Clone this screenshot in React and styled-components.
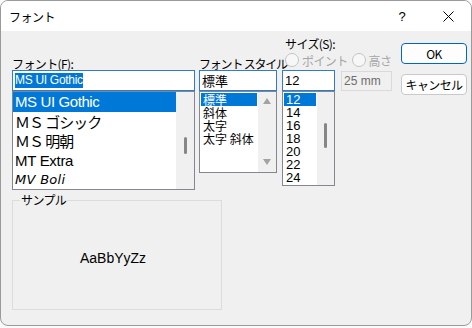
import React from 'react'
import styled, { createGlobalStyle } from 'styled-components'

const GlobalStyle = createGlobalStyle`
  html, body { margin: 0; padding: 0; background: #fafafa; }
  body { font-family: "Noto Sans CJK JP", "Noto Sans", sans-serif; }
`

const Window = styled.div`
  width: 472px;
  height: 326px;
  box-sizing: border-box;
  border: 1px solid #9a9a9a;
  border-radius: 8px;
  overflow: hidden;
  display: flex;
  flex-direction: column;
  background: #f0f0f0;
`

const TitleBar = styled.div`
  height: 30px;
  background: #fff;
  display: flex;
  align-items: center;
  padding-left: 8px;
  font-size: 12px;
  color: #000;
`

const TitleText = styled.div`
  flex: 1;
  letter-spacing: -0.5px;
`

const TitleBtn = styled.div`
  width: 46px;
  height: 30px;
  display: flex;
  align-items: center;
  justify-content: center;
  font-family: "Liberation Sans", sans-serif;
  font-size: 13px;
`

const Body = styled.div`
  flex: 1;
  padding: 6px 0 0 11px;
`

const Top = styled.div`
  display: flex;
  align-items: flex-start;
`

const Column = styled.div`
  width: ${p => p.$w}px;
  margin-left: ${p => p.$ml || 0}px;
  margin-top: ${p => p.$mt || 0}px;
  display: flex;
  flex-direction: column;
`

const Label = styled.div`
  height: 13px;
  line-height: 13px;
  font-size: 12px;
  letter-spacing: ${p => p.$ls ?? -0.6}px;
  color: #000;
  margin-left: ${p => p.$ml || 0}px;
  white-space: nowrap;
`

const RadioRow = styled.div`
  height: 20px;
  display: flex;
  align-items: center;
  margin-left: 3px;
  gap: 3px;
  font-size: 12px;
  letter-spacing: -0.6px;
  color: #a6a6a6;
`

const Radio = styled.span`
  width: 12px;
  height: 12px;
  border: 1px solid #c4c4c4;
  border-radius: 50%;
  background: #f7f7f7;
  margin-left: ${p => p.$ml || 0}px;
`

const EditRow = styled.div`
  display: flex;
  align-items: flex-start;
  gap: 6px;
`

const Edit = styled.div`
  width: ${p => p.$w}px;
  height: 21px;
  box-sizing: border-box;
  border: 1px solid #2e7bcf;
  background: #fff;
  display: flex;
  align-items: center;
  padding-left: 2px;
  font-size: ${p => p.$fs || 13}px;
  font-family: ${p => p.$latin ? '"Liberation Sans", sans-serif' : '"Noto Sans CJK JP", sans-serif'};
  color: #000;
`

const Selected = styled.span`
  background: #0078d7;
  color: #fff;
  line-height: 15px;
  letter-spacing: -0.3px;
`

const MmBox = styled.div`
  width: 51px;
  height: 20px;
  margin-top: 1px;
  box-sizing: border-box;
  border: 1px solid #dadada;
  display: flex;
  align-items: center;
  padding-left: 2px;
  font-family: "Liberation Sans", sans-serif;
  font-size: 12px;
  color: #6d6d6d;
`

const List = styled.div`
  width: ${p => p.$w}px;
  height: ${p => p.$h}px;
  box-sizing: border-box;
  border: 1px solid #828790;
  background: #fff;
  display: flex;
  overflow: hidden;
`

const Items = styled.div`
  flex: 1;
  padding: ${p => p.$pad || 0}px;
  overflow: hidden;
`

const Item = styled.div`
  height: ${p => p.$h}px;
  line-height: ${p => p.$h}px;
  padding-left: 2px;
  font-size: ${p => p.$fs}px;
  font-family: ${p => p.$font || '"Noto Sans CJK JP", sans-serif'};
  font-style: ${p => p.$italic ? 'italic' : 'normal'};
  letter-spacing: ${p => p.$ls || 0}px;
  white-space: nowrap;
  background: ${p => p.$sel ? '#0078d7' : 'transparent'};
  color: ${p => p.$sel ? '#fff' : '#000'};
`

const Track = styled.div`
  width: ${p => p.$w}px;
  background: #f0f0f0;
  display: flex;
  flex-direction: column;
  align-items: center;
  justify-content: ${p => p.$arrows ? 'space-between' : 'flex-start'};
  padding: ${p => p.$arrows ? '6px 0 7px' : '0'};
  box-sizing: border-box;
`

const Thumb = styled.div`
  width: 3px;
  height: ${p => p.$h}px;
  margin-top: ${p => p.$top}px;
  background: #868686;
  border-radius: 2px;
`

const Arrow = styled.div`
  width: 0;
  height: 0;
  border-left: 4.5px solid transparent;
  border-right: 4.5px solid transparent;
  ${p => p.$down ? 'border-top: 6px solid #a3a3a3;' : 'border-bottom: 6px solid #a3a3a3;'}
`

const Button = styled.div`
  width: 66px;
  height: 21px;
  box-sizing: border-box;
  border: 1px solid ${p => p.$default ? '#0067c0' : '#c9c9c9'};
  border-radius: 4px;
  background: #fdfdfd;
  display: flex;
  align-items: center;
  justify-content: center;
  font-size: 12px;
  letter-spacing: -0.6px;
  margin-bottom: 10px;
  color: #000;
`

const Group = styled.div`
  position: relative;
  width: 210px;
  height: 110px;
  box-sizing: border-box;
  margin-top: 10px;
  border: 1px solid #dcdcdc;
  display: flex;
  align-items: center;
  justify-content: center;
  padding: 6px 8px 0 0;
`

const GroupLabel = styled.div`
  position: absolute;
  top: -8px;
  left: 7px;
  padding: 0 1px;
  background: #f0f0f0;
  font-size: 12px;
  letter-spacing: -0.6px;
  line-height: 14px;
`

const SampleText = styled.div`
  font-family: "Liberation Sans", sans-serif;
  font-size: 14px;
  color: #000;
`

const fonts = [
  { name: 'MS UI Gothic', font: '"Liberation Sans", sans-serif', fs: 15, ls: -0.4, sel: true },
  { name: 'ＭＳ ゴシック', fs: 15, ls: -1 },
  { name: 'ＭＳ 明朝', fs: 15, ls: -1, font: '"Noto Sans CJK JP", serif' },
  { name: 'MT Extra', font: '"Liberation Sans", sans-serif', fs: 15, ls: -0.3 },
  { name: 'MV Boli', font: '"DejaVu Sans", sans-serif', fs: 13, italic: true, ls: 0.3 },
]

const styles = ['標準', '斜体', '太字', '太字 斜体']
const sizes = ['12', '14', '16', '18', '20', '22', '24']

export default function App() {
  return (
    <>
      <GlobalStyle />
      <Window>
        <TitleBar>
          <TitleText>フォント</TitleText>
          <TitleBtn>?</TitleBtn>
          <TitleBtn>
            <svg width="11" height="11" viewBox="0 0 11 11">
              <path d="M0.5 0.5 L10.5 10.5 M10.5 0.5 L0.5 10.5" stroke="#000" strokeWidth="1" />
            </svg>
          </TitleBtn>
        </TitleBar>
        <Body>
          <Top>
            <Column $w={183} $mt={20}>
              <Label>フォント(F):</Label>
              <Edit $w={183} $fs={12} $latin>
                <Selected>MS UI Gothic</Selected>
              </Edit>
              <List $w={183} $h={99}>
                <Items>
                  {fonts.map(f => (
                    <Item key={f.name} $h={19.5} $fs={f.fs} $font={f.font} $ls={f.ls} $italic={f.italic} $sel={f.sel}>
                      {f.name}
                    </Item>
                  ))}
                </Items>
                <Track $w={18}>
                  <Thumb $h={17} $top={45} />
                </Track>
              </List>
            </Column>

            <Column $w={78} $mt={20} $ml={4}>
              <Label $ls={-1.2}>フォント スタイル</Label>
              <Edit $w={78}>標準</Edit>
              <List $w={78} $h={82}>
                <Items $pad={1}>
                  {styles.map((s, i) => (
                    <Item key={s} $h={13} $fs={12} $sel={i === 0}>{s}</Item>
                  ))}
                </Items>
                <Track $w={18} $arrows>
                  <Arrow />
                  <Arrow $down />
                </Track>
              </List>
            </Column>

            <Column $w={110} $ml={5}>
              <Label $ml={3}>サイズ(S):</Label>
              <RadioRow>
                <Radio />
                <span>ポイント</span>
                <Radio $ml={1} />
                <span>高さ</span>
              </RadioRow>
              <EditRow>
                <Edit $w={53} $latin>12</Edit>
                <MmBox>25 mm</MmBox>
              </EditRow>
              <List $w={53} $h={95}>
                <Items $pad={1}>
                  {sizes.map((s, i) => (
                    <Item key={s} $h={13} $fs={13} $font={'"Liberation Sans", sans-serif'} $sel={i === 0}>{s}</Item>
                  ))}
                </Items>
                <Track $w={17}>
                  <Thumb $h={25} $top={31} />
                </Track>
              </List>
            </Column>

            <Column $w={66} $ml={9} $mt={6}>
              <Button $default>OK</Button>
              <Button>キャンセル</Button>
            </Column>
          </Top>

          <Group>
            <GroupLabel>サンプル</GroupLabel>
            <SampleText>AaBbYyZz</SampleText>
          </Group>
        </Body>
      </Window>
    </>
  )
}
